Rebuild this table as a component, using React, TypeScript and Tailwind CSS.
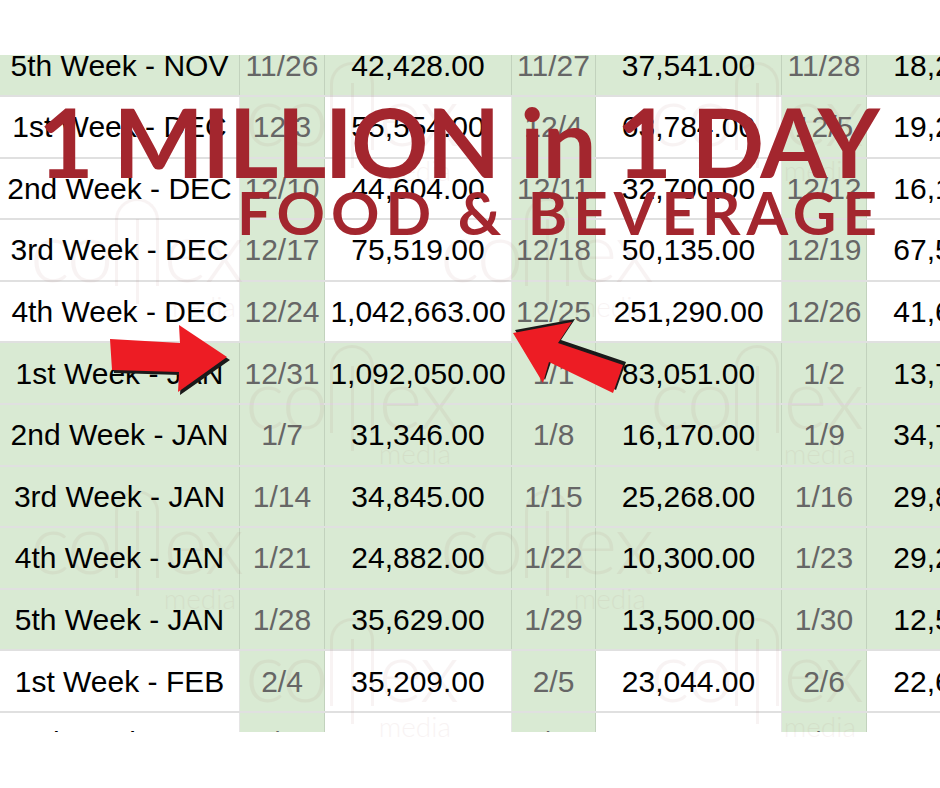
type Row = { name: string; green: boolean; cells: string[] };

const rows: Row[] = [
  { name: "5th Week - NOV", green: true, cells: ["11/26", "42,428.00", "11/27", "37,541.00", "11/28", "18,245.00"] },
  { name: "1st Week - DEC", green: false, cells: ["12/3", "55,554.00", "12/4", "63,784.00", "12/5", "19,230.00"] },
  { name: "2nd Week - DEC", green: false, cells: ["12/10", "44,604.00", "12/11", "32,700.00", "12/12", "16,150.00"] },
  { name: "3rd Week - DEC", green: false, cells: ["12/17", "75,519.00", "12/18", "50,135.00", "12/19", "67,540.00"] },
  { name: "4th Week - DEC", green: false, cells: ["12/24", "1,042,663.00", "12/25", "251,290.00", "12/26", "41,630.00"] },
  { name: "1st Week - JAN", green: true, cells: ["12/31", "1,092,050.00", "1/1", "83,051.00", "1/2", "13,750.00"] },
  { name: "2nd Week - JAN", green: true, cells: ["1/7", "31,346.00", "1/8", "16,170.00", "1/9", "34,720.00"] },
  { name: "3rd Week - JAN", green: true, cells: ["1/14", "34,845.00", "1/15", "25,268.00", "1/16", "29,810.00"] },
  { name: "4th Week - JAN", green: true, cells: ["1/21", "24,882.00", "1/22", "10,300.00", "1/23", "29,240.00"] },
  { name: "5th Week - JAN", green: true, cells: ["1/28", "35,629.00", "1/29", "13,500.00", "1/30", "12,560.00"] },
  { name: "1st Week - FEB", green: false, cells: ["2/4", "35,209.00", "2/5", "23,044.00", "2/6", "22,640.00"] },
  { name: "2nd Week - FEB", green: false, cells: ["2/11", "31,640.00", "2/12", "18,420.00", "2/13", "20,310.00"] },
];

const widths = ["w-[85px]", "w-[187px]", "w-[84px]", "w-[186px]", "w-[85px]", "w-[187px]"];

function SheetRow({ row, first }: { row: Row; first: boolean }) {
  const bg = row.green ? "bg-[#d9ead3]" : "bg-white";
  return (
    <div className={`flex ${first ? "h-[62px]" : "h-[61.6px]"} border-b-2 border-black/[0.12]`}>
      <div className={`w-[240px] shrink-0 flex items-center justify-center text-black border-r border-black/[0.1] ${bg}`}>
        {row.name}
      </div>
      {row.cells.map((c, i) => {
        const isDate = i % 2 === 0;
        const cellBg = isDate || row.green ? "bg-[#d9ead3]" : "bg-white";
        return (
          <div
            key={i}
            className={`${widths[i]} shrink-0 flex items-center justify-center border-r border-black/[0.1] ${cellBg} ${
              isDate ? "text-[#666666]" : "text-black"
            }`}
          >
            {c}
          </div>
        );
      })}
    </div>
  );
}

// faint "conex media" watermark tiled over the sheet
function Watermark({ x, y }: { x: string; y: string }) {
  return (
    <div className={`absolute ${x} ${y} pointer-events-none opacity-[0.05] text-[#8a2a2a]`}>
      <div className="flex items-end leading-none font-['Lato',sans-serif] font-light text-[84px] tracking-tight">
        <span>co</span>
        <div className="w-[44px] h-[88px] mx-[4px] mb-[6px] border-[3px] border-b-0 border-[#8a2a2a] rounded-t-full flex justify-center">
          <div className="w-[3px] h-full bg-[#8a2a2a] mt-[18px]" />
        </div>
        <span>ex</span>
      </div>
      <div className="text-right pr-[6px] text-[28px] leading-none font-['Lato',sans-serif] font-light">media</div>
    </div>
  );
}

export default function App() {
  return (
    <div className="relative w-[940px] h-[788px] bg-white overflow-hidden font-['Liberation_Sans',Arial,sans-serif] text-[30px]">
      <div className="pt-[55px]">
        <div className="h-[677px] overflow-hidden">
          <div className="-mt-[20px] w-[1200px]">
            {rows.map((r, i) => (
              <SheetRow key={i} row={r} first={i === 0} />
            ))}
          </div>
        </div>
      </div>

      <Watermark x="left-[245px]" y="top-[62px]" />
      <Watermark x="left-[650px]" y="top-[62px]" />
      <Watermark x="left-[30px]" y="top-[198px]" />
      <Watermark x="left-[440px]" y="top-[198px]" />
      <Watermark x="left-[245px]" y="top-[345px]" />
      <Watermark x="left-[650px]" y="top-[345px]" />
      <Watermark x="left-[30px]" y="top-[490px]" />
      <Watermark x="left-[440px]" y="top-[490px]" />
      <Watermark x="left-[245px]" y="top-[618px]" />
      <Watermark x="left-[650px]" y="top-[618px]" />

      <div className="absolute left-[38px] top-[93px] leading-none text-[96px] font-bold tracking-[-0.02em] text-[#a3262e] font-['Lato',sans-serif] whitespace-nowrap">
        1 MILLION in 1 DAY
      </div>
      <div className="absolute left-[237px] top-[182px] leading-none text-[60px] font-bold tracking-[0.1em] text-[#a3262e] font-['Lato',sans-serif] whitespace-nowrap">
        FOOD &amp; BEVERAGE
      </div>

      <svg className="absolute left-0 top-0" width="940" height="788" viewBox="0 0 940 788">
        <polygon points="112,342 182,346 181,328 230,360 180,395 181,375 114,373" fill="#1a1a1a" />
        <polygon points="110,339 180,343 179,325 227,357 178,392 179,372 112,370" fill="#ed1c24" />
        <polygon points="515,330 575,319 561,340 626,362 616,390 552,359 545,380" fill="#1a1a1a" />
        <polygon points="513,333 572,322 558,343 623,365 613,393 549,362 543,383" fill="#ed1c24" />
      </svg>
    </div>
  );
}
